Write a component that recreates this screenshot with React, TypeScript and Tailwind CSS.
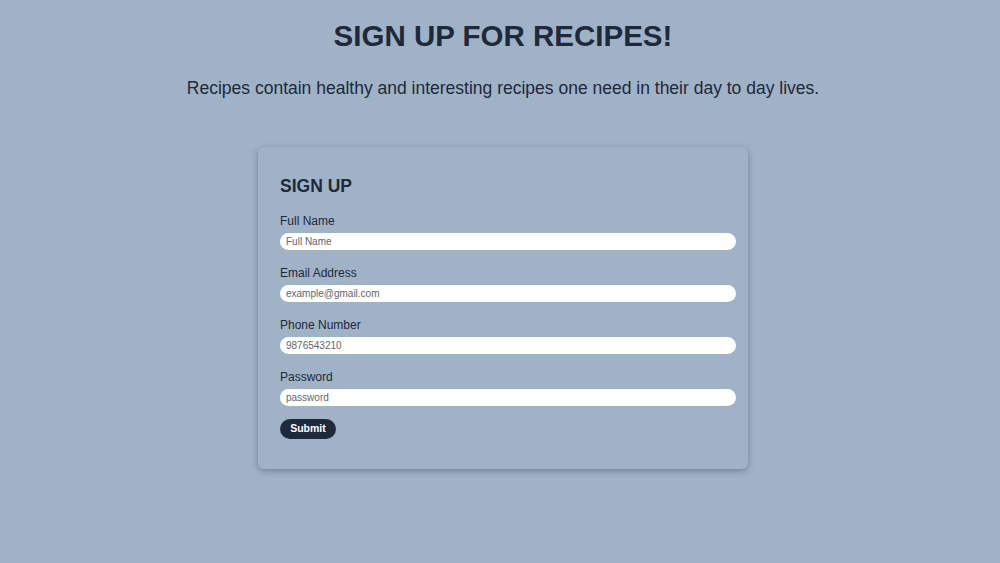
export default function App() {
  const fields = [
    { label: 'Full Name', placeholder: 'Full Name', type: 'text' },
    { label: 'Email Address', placeholder: 'example@gmail.com', type: 'email' },
    { label: 'Phone Number', placeholder: '9876543210', type: 'tel' },
    { label: 'Password', placeholder: 'password', type: 'password' },
  ];

  return (
    <div className="min-h-[563px] w-full bg-[#a0b2c6] text-[#1e293b] font-['Liberation_Sans',Arial,sans-serif] flex flex-col items-center pl-[6px]">
      <h1 className="mt-[19px] text-[29.5px] leading-[34px] font-bold">SIGN UP FOR RECIPES!</h1>
      <p className="mt-[25px] text-[17.5px] leading-[21px]">
        Recipes contain healthy and interesting recipes one need in their day to day lives.
      </p>

      <div className="mt-[48px] w-[490px] rounded-md bg-[#a0b2c6] shadow-[0_2px_6px_rgba(30,41,59,0.35)] pl-[22px] pr-[12px] pt-[28px] pb-[30px]">
        <h2 className="text-[17.5px] leading-[22px] font-bold">SIGN UP</h2>
        <form className="mt-[16px] flex flex-col" onSubmit={(e) => e.preventDefault()}>
          {fields.map((f) => (
            <div key={f.label} className="flex flex-col mb-[15px]">
              <label className="text-[12px] leading-[16px] mb-[4px]">{f.label}</label>
              <input
                type={f.type === 'password' ? 'text' : f.type}
                placeholder={f.placeholder}
                className="h-[17px] w-full rounded-full bg-white px-[6px] text-[10px] outline-none placeholder:text-[#5f6670]"
              />
            </div>
          ))}
          <button
            type="submit"
            className="-mt-[2px] h-[20px] w-[56px] rounded-full bg-[#1e293b] text-white text-[10.5px] font-bold"
          >
            Submit
          </button>
        </form>
      </div>
    </div>
  );
}
